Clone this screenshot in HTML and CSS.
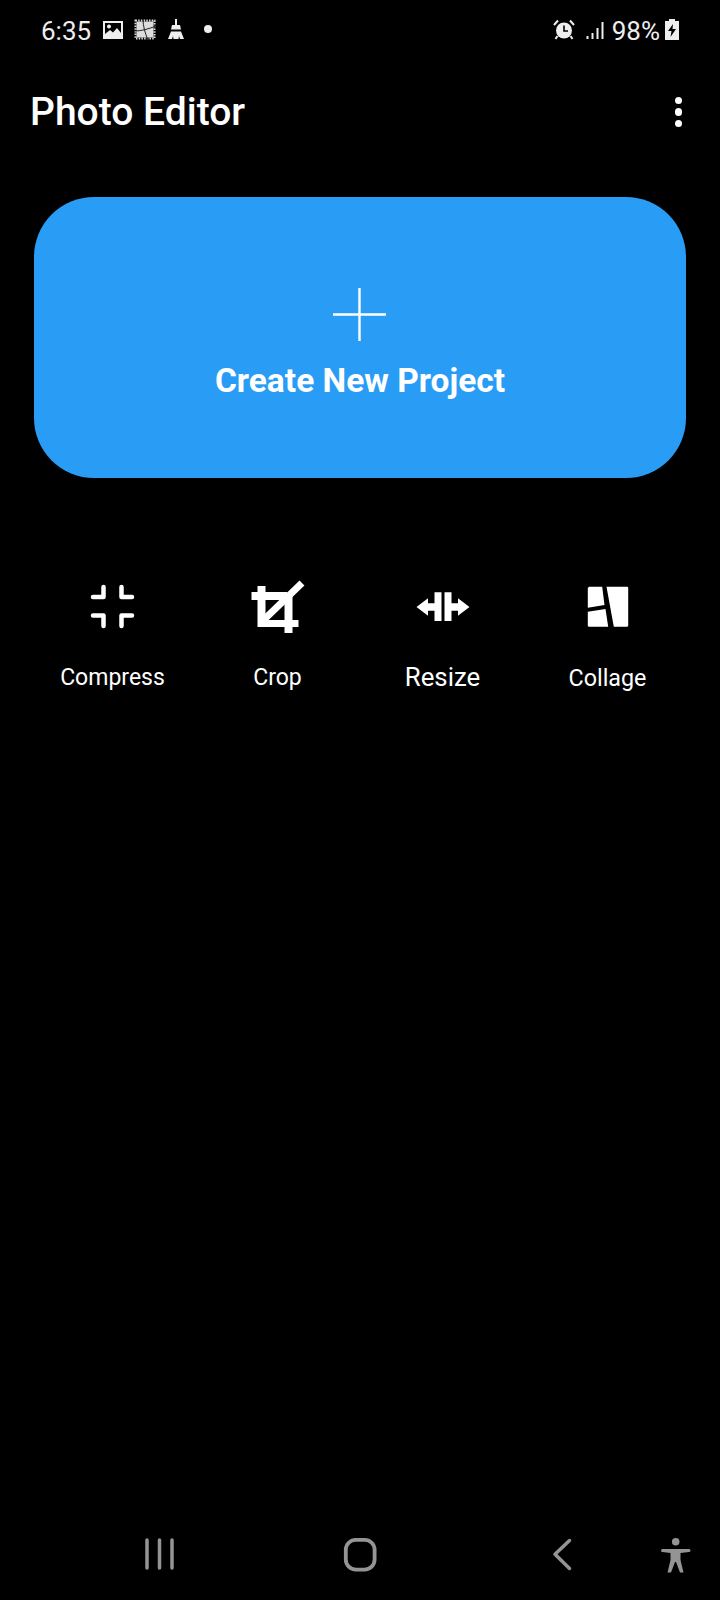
FILE: index.html
```html
<!DOCTYPE html>
<html lang="en">
<head>
<meta charset="utf-8">
<title>Photo Editor</title>
<link rel="stylesheet" href="styles.css">
</head>
<body>
<div class="page">
  <div class="status">
    <span class="time">6:35</span>
    <svg class="s-pic" width="20" height="18" viewBox="0 0 20 18"><path fill="#eee" fill-rule="evenodd" d="M0 0H20V18H0ZM2 2V13L7 9 10 11.500 14 7 18 12V2ZM6 3.500a2 2 0 1 1-.01 0Z"/></svg>
    <svg class="s-patch" width="22" height="21" viewBox="0 0 22 21"><rect x="2.500" y="2.500" width="17" height="16" fill="#ddd"/><rect x="1.500" y="1.500" width="19" height="18" fill="none" stroke="#ddd" stroke-width="2" stroke-dasharray="1.500 1.200"/><path fill="none" stroke="#222" stroke-width="1" d="M9 0C9 7 11 14 14 21M0 12C8 12 14 10 22 7"/></svg>
    <svg class="s-broom" width="16" height="21" viewBox="0 0 16 21"><path fill="#eee" d="M7 0H9V6H12L13 10.500H3L4 6H7ZM3 12.500H13L16 20H12L11 17 10.500 20H5.500L5 17 4 20H0Z"/></svg>
    <span class="s-dot"></span>
    <span class="s-space"></span>
    <svg class="s-alarm" width="22" height="21" viewBox="0 0 22 21"><circle cx="11" cy="11.500" r="8" fill="#eee"/><path fill="none" stroke="#000" stroke-width="1.600" d="M11 6.500V12H15"/><path fill="none" stroke="#eee" stroke-width="2" d="M1 6 5 1.500M21 6 17 1.500M4.500 17 2.500 20M17.500 17 19.500 20"/></svg>
    <svg class="s-signal" width="18" height="18" viewBox="0 0 18 18"><path fill="none" stroke="#eee" stroke-width="2" d="M1.500 14V17M6.500 11V17M11.500 6V17M16.500 0V17"/></svg>
    <span class="pct">98%</span>
    <svg class="s-batt" width="14" height="21" viewBox="0 0 14 21"><path fill="#eee" fill-rule="evenodd" d="M4 0H10V2H14V21H0V2H4ZM8 5 3 12H6.500L5.500 18 11 10H7.500Z"/></svg>
  </div>

  <header class="head">
    <h1 class="title">Photo Editor</h1>
    <div class="more"><i></i><i></i><i></i></div>
  </header>

  <section class="card">
    <svg class="plus" width="53" height="53" viewBox="0 0 53 53"><path stroke="#fff" stroke-width="2.400" d="M26.500 0V53M0 26.500H53"/></svg>
    <div class="card-label">Create New Project</div>
  </section>

  <section class="tools">
    <div class="tool">
      <svg width="60" height="60" viewBox="0 0 60 60"><path fill="none" stroke="#fff" stroke-width="4.500" stroke-linecap="round" stroke-linejoin="round" d="M10 21H20.500V11M49 21H38.500V11M10 39.500H20.500V50M49 39.500H38.500V50"/></svg>
      <span>Compress</span>
    </div>
    <div class="tool">
      <svg width="60" height="60" viewBox="0 0 60 60"><path fill="#fff" d="M3.500 16H9.500V10H17.500V16H39V24H17.500V44H36.500V20H44.500V44H50.500V51H44.500V57H36.500V51H9.500V24H3.500Z"/><path stroke="#fff" stroke-width="7" d="M12.500 47 54 7"/></svg>
      <span>Crop</span>
    </div>
    <div class="tool">
      <svg width="60" height="60" viewBox="0 0 60 60"><path fill="#fff" d="M3.500 31 15 22.300V27.300H21.500V16.300H28.500V45H21.500V34.700H15V39.700ZM56.500 31 45 22.300V27.300H38.500V16.300H31.500V45H38.500V34.700H45V39.700Z"/></svg>
      <span class="big">Resize</span>
    </div>
    <div class="tool">
      <svg width="60" height="60" viewBox="0 0 60 60"><path fill="#fff" d="M11 10.700H24.200L26.500 29 9.800 31.700V12ZM28.500 10.700H49A1.200 1.200 0 0 1 50.200 12V49.500A1.200 1.200 0 0 1 49 50.700H35.800ZM9.800 35.700 27.500 33 30.200 50.700H11A1.200 1.200 0 0 1 9.800 49.500Z"/></svg>
      <span class="mid">Collage</span>
    </div>
  </section>

  <nav class="nav">
    <svg width="40" height="40" viewBox="0 0 40 40"><path fill="none" stroke="#949494" stroke-width="3.500" stroke-linecap="round" d="M7 5V33M19.500 5V33M32 5V33"/></svg>
    <svg width="40" height="40" viewBox="0 0 40 40"><rect x="5.800" y="4.800" width="28.800" height="29.800" rx="10" fill="none" stroke="#949494" stroke-width="3.800"/></svg>
    <svg width="40" height="40" viewBox="0 0 40 40"><path fill="none" stroke="#949494" stroke-width="3.500" stroke-linecap="round" stroke-linejoin="round" d="M29.500 5.500 15 19.300 29.500 33.500"/></svg>
    <svg class="a11y" width="40" height="40" viewBox="0 0 40 40"><circle cx="20.700" cy="6.700" r="3.800" fill="#949494"/><path fill="#949494" d="M7.500 14H34A1.500 1.500 0 0 1 34 17L25.500 18V25L28.500 37.500H25L21 27H20L16 37.500H12.500L15.500 25V18L7.500 17A1.500 1.500 0 0 1 7.500 14Z"/></svg>
  </nav>
</div>
</body>
</html>
```
FILE: styles.css
```css
* { box-sizing: border-box; }
html, body { margin: 0; padding: 0; background: #000; }
.page {
  width: 720px;
  height: 1600px;
  display: flex;
  flex-direction: column;
  background: #000;
  font-family: Roboto, "Liberation Sans", sans-serif;
  color: #fff;
  overflow: hidden;
}
.status {
  height: 60px;
  padding: 19px 41px 0 41px;
  display: flex;
  align-items: flex-start;
  color: #eee;
  font-size: 26px;
  line-height: 25px;
}
.time { margin-right: 12px; }
.s-pic { margin-top: 2px; margin-right: 11px; }
.s-patch { margin-right: 12px; }
.s-broom { margin-right: 20px; }
.s-dot { width: 8px; height: 8px; border-radius: 50%; background: #eee; margin-top: 6px; }
.s-space { flex: 1; }
.s-alarm { margin-right: 11px; }
.s-signal { margin-top: 3px; margin-right: 8px; }
.pct { margin-right: 5px; }
.head {
  height: 104px;
  padding: 0 38px 0 30px;
  display: flex;
  align-items: center;
  justify-content: space-between;
}
.title { margin: 0; font-size: 39px; font-weight: 500; line-height: 44px; }
.more { display: flex; flex-direction: column; gap: 4px; }
.more i { display: block; width: 7.500px; height: 7.500px; border-radius: 50%; background: #fff; }
.card {
  margin: 33px 34px 0;
  height: 281px;
  border-radius: 60px;
  background: #299cf6;
  display: flex;
  flex-direction: column;
  align-items: center;
  padding-top: 91px;
}
.plus { display: block; margin-left: -1px; margin-right: 1px; }
.card-label { margin-top: 20px; font-size: 33.500px; font-weight: 700; line-height: 40px; }
.tools {
  margin: 98px 30px 0;
  display: grid;
  grid-template-columns: repeat(4, 165px);
}
.tool { display: flex; flex-direction: column; align-items: center; gap: 28px; font-size: 23px; line-height: 28px; }
.tool .big { font-size: 25.800px; margin-top: -1px; }
.tool .mid { font-size: 23.300px; }
.nav {
  margin-top: auto;
  height: 100px;
  padding: 35px 0 0 140px;
  display: flex;
  align-items: flex-start;
  gap: 160px;
}
.nav .a11y { margin-left: -85px; }
```
